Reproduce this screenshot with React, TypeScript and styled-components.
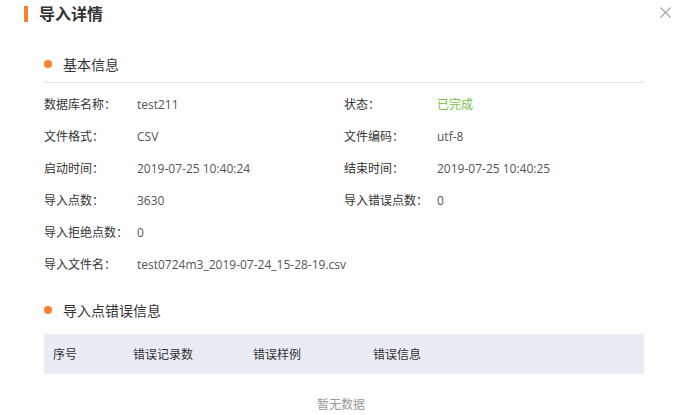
import styled, { createGlobalStyle } from "styled-components";

const GlobalStyle = createGlobalStyle`
  body {
    margin: 0;
    background: #fff;
    font-family: "Open Sans", "Noto Sans CJK SC", sans-serif;
    color: #333;
  }
`;

const Dialog = styled.div`
  position: relative;
  width: 682px;
  height: 415px;
  overflow: hidden;
  background: #fff;
`;

const Header = styled.div`
  height: 28px;
  display: flex;
  align-items: center;
  gap: 11px;
  padding-left: 24px;
`;

const Bar = styled.span`
  width: 4px;
  height: 16px;
  background: #ff7e2b;
`;

const Title = styled.h1`
  margin: 0;
  font-size: 16px;
  line-height: 16px;
  font-weight: 700;
  color: #333;
`;

const Close = styled.button`
  position: absolute;
  top: 6px;
  left: 659px;
  width: 13px;
  height: 13px;
  padding: 0;
  border: 0;
  background: none;
  cursor: pointer;
  display: flex;
`;

const Body = styled.div`
  padding: 0 38px 0 44px;
`;

const SectionTitle = styled.div<{ $divider?: boolean; $top: number }>`
  height: 36px;
  margin-top: ${({ $top }) => $top}px;
  display: flex;
  align-items: center;
  gap: 11px;
  font-size: 14px;
  color: #333;
  border-bottom: ${({ $divider }) => ($divider ? "1px solid #e8e8e8" : "none")};
`;

const Dot = styled.span`
  width: 8px;
  height: 8px;
  border-radius: 50%;
  background: #ff7e2b;
`;

const InfoGrid = styled.div`
  margin-top: 5px;
  display: grid;
  grid-template-columns: 1fr 1fr;
  grid-auto-rows: 32px;
`;

const Item = styled.div<{ $wide?: boolean }>`
  display: flex;
  align-items: center;
  font-size: 12px;
  grid-column: ${({ $wide }) => ($wide ? "1 / span 2" : "auto")};
`;

const Label = styled.span`
  width: 93px;
  flex: none;
  color: #333;
`;

const Value = styled.span<{ $ok?: boolean }>`
  color: ${({ $ok }) => ($ok ? "#72c43f" : "#555")};
`;

const Table = styled.div`
  margin-top: 6px;
`;

const HeadRow = styled.div`
  height: 40px;
  display: grid;
  grid-template-columns: 80px 120px 120px 1fr;
  align-items: center;
  background: #e9ecf4;
  font-size: 12px;
  color: #333;
`;

const HeadCell = styled.div`
  padding-left: 9px;
`;

const Empty = styled.div`
  height: 60px;
  display: flex;
  align-items: center;
  justify-content: center;
  padding-right: 6px;
  font-size: 12px;
  color: #999;
`;

const info: [string, string, boolean?][] = [
  ["数据库名称：", "test211"],
  ["状态：", "已完成", true],
  ["文件格式：", "CSV"],
  ["文件编码：", "utf-8"],
  ["启动时间：", "2019-07-25 10:40:24"],
  ["结束时间：", "2019-07-25 10:40:25"],
  ["导入点数：", "3630"],
  ["导入错误点数：", "0"],
  ["导入拒绝点数：", "0"],
];

export default function App() {
  return (
    <Dialog>
      <GlobalStyle />
      <Header>
        <Bar />
        <Title>导入详情</Title>
      </Header>
      <Close aria-label="关闭">
        <svg width="13" height="13" viewBox="0 0 13 13">
          <path d="M1.5 1.5 L11.5 11.5 M11.5 1.5 L1.5 11.5" stroke="#a0a4ab" strokeWidth="1.1" />
        </svg>
      </Close>
      <Body>
        <SectionTitle $divider $top={18}>
          <Dot />
          基本信息
        </SectionTitle>
        <InfoGrid>
          {info.map(([l, v, ok]) => (
            <Item key={l}>
              <Label>{l}</Label>
              <Value $ok={ok}>{v}</Value>
            </Item>
          ))}
          <Item />
          <Item $wide>
            <Label>导入文件名：</Label>
            <Value>test0724m3_2019-07-24_15-28-19.csv</Value>
          </Item>
        </InfoGrid>
        <SectionTitle $top={12}>
          <Dot />
          导入点错误信息
        </SectionTitle>
        <Table>
          <HeadRow>
            <HeadCell>序号</HeadCell>
            <HeadCell>错误记录数</HeadCell>
            <HeadCell>错误样例</HeadCell>
            <HeadCell>错误信息</HeadCell>
          </HeadRow>
          <Empty>暂无数据</Empty>
        </Table>
      </Body>
    </Dialog>
  );
}
